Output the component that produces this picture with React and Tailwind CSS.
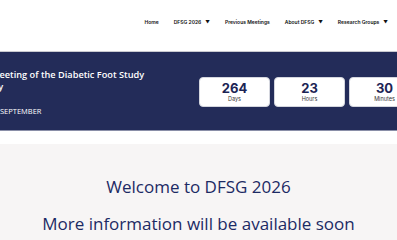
export default function App() {
  const nav = [
    { t: "Home", c: false },
    { t: "DFSG 2026", c: true },
    { t: "Previous Meetings", c: false },
    { t: "About DFSG", c: true },
    { t: "Research Groups", c: true },
  ];
  const boxes = [
    { n: "264", l: "Days" },
    { n: "23", l: "Hours" },
    { n: "30", l: "Minutes" },
    { n: "12", l: "Seconds" },
  ];
  return (
    <div className="w-[397px] h-[240px] overflow-hidden bg-white relative">
      <header className="h-[51px] flex justify-end items-start pt-[19px] pr-[9px] gap-[15px]" style={{ fontFamily: "Inter, 'Liberation Sans', sans-serif" }}>
        {nav.map((n) => (
          <div key={n.t} className="flex items-center gap-[4px] text-[5px] font-semibold text-[#111] leading-[7px]">
            <span>{n.t}</span>
            {n.c && <span className="text-[4.5px]">▼</span>}
          </div>
        ))}
      </header>
      <div className="h-[1px] bg-[#c9cad0]" />
      <div className="h-[78px] bg-[#232c59] flex overflow-hidden">
        <div className="w-[199px] shrink-0 pt-[17px] text-white" style={{ fontFamily: "'Open Sans', sans-serif" }}>
          <div className="text-[9.2px] font-semibold leading-[12px] whitespace-nowrap ml-[-9px]">Meeting of the Diabetic Foot Study</div>
          <div className="text-[9.2px] font-semibold leading-[12px] whitespace-nowrap ml-[-16px]">Italy</div>
          <div className="text-[7.5px] leading-[10px] mt-[13px] whitespace-nowrap">SEPTEMBER</div>
        </div>
        <div className="flex gap-[4px] pt-[25px] shrink-0" style={{ fontFamily: "Inter, sans-serif" }}>
          {boxes.map((b) => (
            <div key={b.l} className="w-[71px] h-[30px] shrink-0 bg-white rounded-[4px] border border-[#d4d6de] flex flex-col items-center justify-center">
              <div className="text-[13px] font-bold text-[#1c2454] leading-[13px]">{b.n}</div>
              <div className="text-[5.5px] text-[#333] leading-[7px] mt-[1px]">{b.l}</div>
            </div>
          ))}
        </div>
      </div>
      <div className="h-[1px] bg-[#8a8fa8]" />
      <div className="h-[13px] bg-white" />
      <div className="bg-[#f7f5f5] h-[200px] flex flex-col items-center pt-[31px] text-[#1c2a64]" style={{ fontFamily: "'Open Sans', sans-serif" }}>
        <div className="text-[17px] leading-[24px]">Welcome to DFSG 2026</div>
        <div className="text-[17px] leading-[24px] mt-[13px]">More information will be available soon</div>
      </div>
    </div>
  );
}
